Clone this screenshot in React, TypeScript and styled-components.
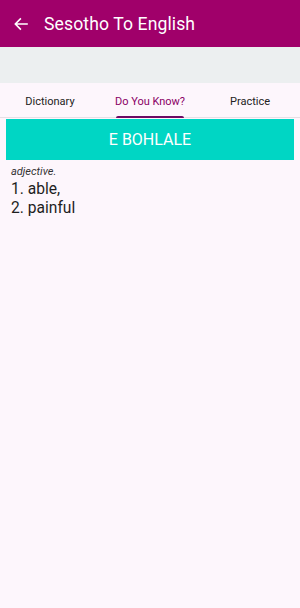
import React from "react";
import styled, { createGlobalStyle } from "styled-components";

const Global = createGlobalStyle`
  html, body { margin: 0; padding: 0; }
  body { background: #fdf6fc; font-family: Roboto, "Noto Sans", sans-serif; }
`;

const Page = styled.div`
  width: 300px;
  min-height: 608px;
  background: #fdf6fc;
  display: flex;
  flex-direction: column;
`;

const AppBar = styled.div`
  height: 47px;
  background: #a0006a;
  display: flex;
  align-items: center;
  padding-left: 13px;
  gap: 15px;
  box-sizing: border-box;
`;

const Title = styled.div`
  color: #fff;
  font-size: 17.6px;
  font-weight: 400;
  letter-spacing: 0.1px;
`;

const Band = styled.div`
  height: 36px;
  background: #eceff0;
`;

const Tabs = styled.div`
  height: 35px;
  display: flex;
  border-bottom: 1px solid #e6dfe4;
  box-sizing: border-box;
`;

const Tab = styled.div<{ $active?: boolean }>`
  flex: 1;
  position: relative;
  display: flex;
  align-items: center;
  justify-content: center;
  padding-top: 2px;
  font-size: 11px;
  color: ${(p) => (p.$active ? "#8a0066" : "#222")};
  &::after {
    content: "";
    display: ${(p) => (p.$active ? "block" : "none")};
    position: absolute;
    bottom: -1px;
    left: 50%;
    transform: translateX(-50%);
    width: 68px;
    height: 2px;
    border-radius: 2px 2px 0 0;
    background: #6e0a64;
  }
`;

const Content = styled.div`
  padding: 1px 6px 0;
`;

const WordCard = styled.div`
  height: 41px;
  background: #00d6c4;
  color: #fff;
  font-size: 16px;
  display: flex;
  align-items: center;
  justify-content: center;
`;

const Pos = styled.div`
  font-style: italic;
  font-size: 11px;
  color: #333;
  margin: 5px 0 0 5px;
  line-height: 14px;
`;

const Meaning = styled.div`
  font-size: 15.6px;
  color: #1e1e1e;
  margin-left: 5px;
  line-height: 19px;
  &:first-of-type { margin-top: 1px; }
`;

const List = styled.div`
  margin-top: 1px;
`;

export default function App() {
  return (
    <>
      <Global />
      <Page>
        <AppBar>
          <svg width="16" height="16" viewBox="0 0 24 24" fill="none" stroke="#fff" strokeWidth="2.4" strokeLinecap="square">
            <path d="M21 12H4M11 4.5L3.5 12L11 19.5" />
          </svg>
          <Title>Sesotho To English</Title>
        </AppBar>
        <Band />
        <Tabs>
          <Tab>Dictionary</Tab>
          <Tab $active>Do You Know?</Tab>
          <Tab>Practice</Tab>
        </Tabs>
        <Content>
          <WordCard>E BOHLALE</WordCard>
          <Pos>adjective.</Pos>
          <List>
            <Meaning>1. able,</Meaning>
            <Meaning>2. painful</Meaning>
          </List>
        </Content>
      </Page>
    </>
  );
}
